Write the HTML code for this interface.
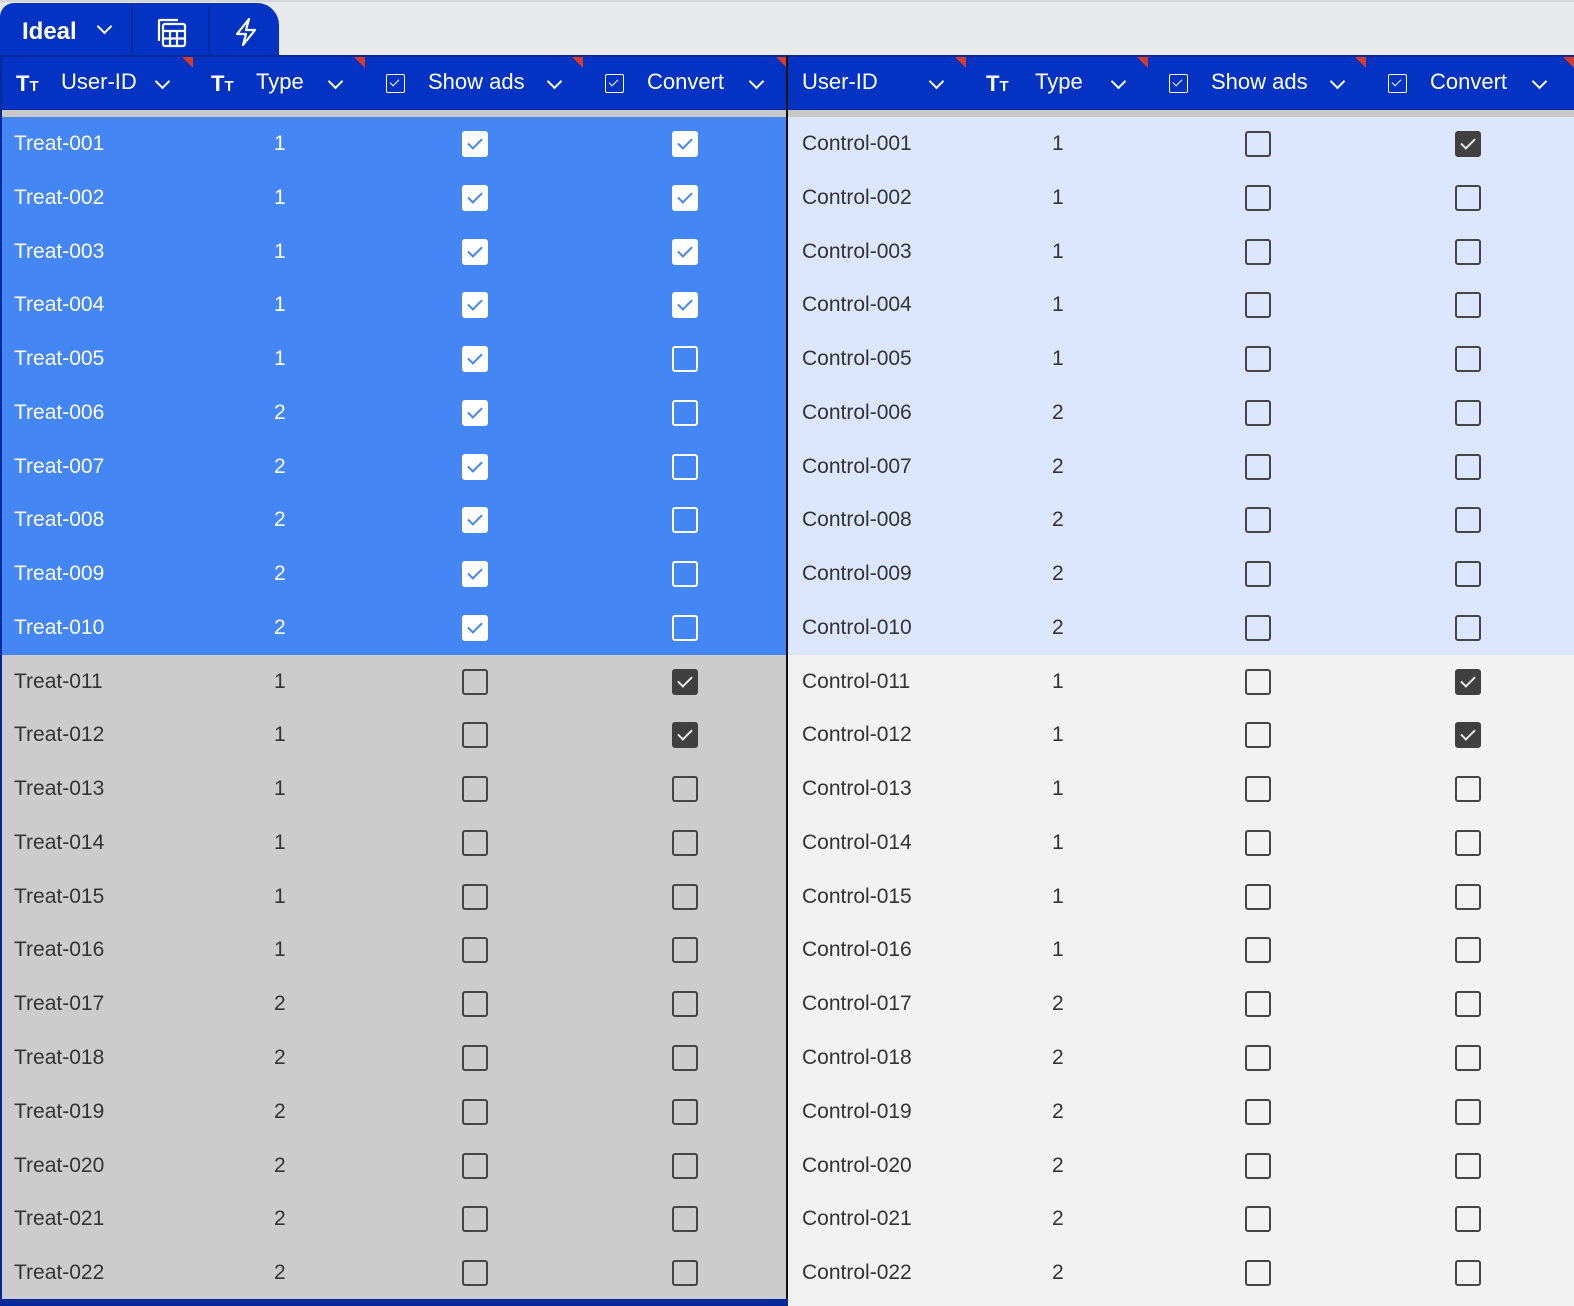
<!DOCTYPE html>
<html><head><meta charset="utf-8"><style>
*{margin:0;padding:0;box-sizing:border-box}
body{width:1574px;height:1306px;background:#e8e9eb;font-family:"Liberation Sans",sans-serif;position:relative;overflow:hidden}
.topl{position:absolute;top:0;left:0;width:1574px;height:2px;background:#d4d5d8}
.tabs{position:absolute;left:0;top:3px;width:279px;height:54px;background:#0433c4;border-radius:14px 22px 0 0}
.tabs .sep{position:absolute;top:2px;width:2px;height:52px;background:#032a9e}
.hdr{position:absolute;left:0;top:55px;width:1574px;height:56px;background:#0433c4;border-top:2px solid #05299a;border-bottom:2px solid #05299a;color:#fff;font-size:22px}
.hdr span{position:absolute;top:12px}
.tt{font-weight:bold;font-size:22px;top:14px!important}
.tt small{font-size:15px}
.hcb{position:absolute;top:17px;width:19px;height:19px;border:1.6px solid #fff;border-radius:2px}
.hcb:after{content:"";position:absolute;left:5px;top:2px;width:4px;height:8px;border-right:1.6px solid #fff;border-bottom:1.6px solid #fff;transform:rotate(45deg)}
.chev{position:absolute;top:19px;width:11px;height:11px;border-right:2.2px solid #fff;border-bottom:2.2px solid #fff;transform:rotate(45deg)}
.red{position:absolute;top:0;width:0;height:0;border-left:11px solid transparent;border-top:11px solid #d63a2a}
.strip{position:absolute;left:0;top:110px;width:1574px;height:7px;background:#c8c8c8}
.grid{position:absolute;left:0;top:117px;width:1574px;height:1183px}
.r{position:relative;height:53.78px;font-size:21px;color:#333}
.r span{position:absolute;top:15px}
.tr{background:#cccccc}
.ts{background:#4386f4;color:#fff}
.cr{background:#f2f2f2}
.cs{background:#dce6fe}
.half{position:absolute;top:0;height:100%}
.L{left:0;width:786px}
.R{left:788px;width:786px}
.cb{position:absolute;top:14px;width:26px;height:26px;border:2.6px solid #454545;border-radius:3px}
.ts .cb{border-color:#fff}
.cb.on{background:#404040;border-color:#404040}
.ts .cb.on{background:#fff;border-color:#fff}
.cb.on:after{content:"";position:absolute;left:7px;top:2px;width:6px;height:12px;border-right:2.4px solid #e8e8e8;border-bottom:2.4px solid #e8e8e8;transform:rotate(45deg)}
.ts .cb.on:after{border-color:#4386f4}
.divl{position:absolute;left:786px;top:55px;width:2px;height:1251px;background:#111}
.leftb{position:absolute;left:0;top:55px;width:2px;height:1250px;background:#05299a}
.bot{position:absolute;left:0;top:1299px;width:788px;height:7px;background:#05299a}
.bot2{position:absolute;left:788px;top:1300px;width:786px;height:6px;background:#f2f2f2}
</style></head><body>
<div class="topl"></div>
<div class="tabs">
<span style="position:absolute;left:22px;top:15px;color:#fff;font-size:24px;font-weight:bold">Ideal</span>
<div class="chev" style="left:99px;top:18px;border-color:#fff"></div>
<div class="sep" style="left:131px"></div>
<svg style="position:absolute;left:156px;top:14px" width="32" height="32" viewBox="0 0 32 32" fill="none" stroke="#fff" stroke-width="2.2"><path d="M3 24V4q0-1 1-1h18"/><rect x="7" y="7" width="22" height="22" rx="2"/><path d="M7 14h22M14 14v15M21 14v15M7 21.5h22"/></svg>
<div class="sep" style="left:208px"></div>
<svg style="position:absolute;left:233px;top:14px" width="26" height="30" viewBox="0 0 26 30" fill="none" stroke="#fff" stroke-width="2.2" stroke-linejoin="round"><path d="M16 2L4 17h9l-3 11 12-15h-9z"/></svg>
</div>
<div class="hdr">
<span class="tt" style="left:16px">T<small>T</small></span><span style="left:61px">User-ID</span><div class="chev" style="left:157px"></div><div class="red" style="left:182px"></div>
<span class="tt" style="left:211px">T<small>T</small></span><span style="left:256px">Type</span><div class="chev" style="left:330px"></div><div class="red" style="left:354px"></div>
<div class="hcb" style="left:386px"></div><span style="left:428px">Show ads</span><div class="chev" style="left:549px"></div><div class="red" style="left:572px"></div>
<div class="hcb" style="left:605px"></div><span style="left:647px">Convert</span><div class="chev" style="left:751px"></div><div class="red" style="left:776px"></div>
<span style="left:802px">User-ID</span><div class="chev" style="left:931px"></div><div class="red" style="left:955px"></div>
<span class="tt" style="left:986px">T<small>T</small></span><span style="left:1035px">Type</span><div class="chev" style="left:1113px"></div><div class="red" style="left:1137px"></div>
<div class="hcb" style="left:1169px"></div><span style="left:1211px">Show ads</span><div class="chev" style="left:1332px"></div><div class="red" style="left:1355px"></div>
<div class="hcb" style="left:1388px"></div><span style="left:1430px">Convert</span><div class="chev" style="left:1534px"></div><div class="red" style="left:1563px"></div>
</div>
<div class="strip"></div>
<div class="grid">
<div class="r"><div class="half L ts"><span style="left:14px">Treat-001</span><span style="left:274px">1</span><i class="cb on" style="left:462px"></i><i class="cb on" style="left:672px"></i></div><div class="half R cs"><span style="left:14px">Control-001</span><span style="left:264px">1</span><i class="cb" style="left:457px"></i><i class="cb on" style="left:667px"></i></div></div>
<div class="r"><div class="half L ts"><span style="left:14px">Treat-002</span><span style="left:274px">1</span><i class="cb on" style="left:462px"></i><i class="cb on" style="left:672px"></i></div><div class="half R cs"><span style="left:14px">Control-002</span><span style="left:264px">1</span><i class="cb" style="left:457px"></i><i class="cb" style="left:667px"></i></div></div>
<div class="r"><div class="half L ts"><span style="left:14px">Treat-003</span><span style="left:274px">1</span><i class="cb on" style="left:462px"></i><i class="cb on" style="left:672px"></i></div><div class="half R cs"><span style="left:14px">Control-003</span><span style="left:264px">1</span><i class="cb" style="left:457px"></i><i class="cb" style="left:667px"></i></div></div>
<div class="r"><div class="half L ts"><span style="left:14px">Treat-004</span><span style="left:274px">1</span><i class="cb on" style="left:462px"></i><i class="cb on" style="left:672px"></i></div><div class="half R cs"><span style="left:14px">Control-004</span><span style="left:264px">1</span><i class="cb" style="left:457px"></i><i class="cb" style="left:667px"></i></div></div>
<div class="r"><div class="half L ts"><span style="left:14px">Treat-005</span><span style="left:274px">1</span><i class="cb on" style="left:462px"></i><i class="cb" style="left:672px"></i></div><div class="half R cs"><span style="left:14px">Control-005</span><span style="left:264px">1</span><i class="cb" style="left:457px"></i><i class="cb" style="left:667px"></i></div></div>
<div class="r"><div class="half L ts"><span style="left:14px">Treat-006</span><span style="left:274px">2</span><i class="cb on" style="left:462px"></i><i class="cb" style="left:672px"></i></div><div class="half R cs"><span style="left:14px">Control-006</span><span style="left:264px">2</span><i class="cb" style="left:457px"></i><i class="cb" style="left:667px"></i></div></div>
<div class="r"><div class="half L ts"><span style="left:14px">Treat-007</span><span style="left:274px">2</span><i class="cb on" style="left:462px"></i><i class="cb" style="left:672px"></i></div><div class="half R cs"><span style="left:14px">Control-007</span><span style="left:264px">2</span><i class="cb" style="left:457px"></i><i class="cb" style="left:667px"></i></div></div>
<div class="r"><div class="half L ts"><span style="left:14px">Treat-008</span><span style="left:274px">2</span><i class="cb on" style="left:462px"></i><i class="cb" style="left:672px"></i></div><div class="half R cs"><span style="left:14px">Control-008</span><span style="left:264px">2</span><i class="cb" style="left:457px"></i><i class="cb" style="left:667px"></i></div></div>
<div class="r"><div class="half L ts"><span style="left:14px">Treat-009</span><span style="left:274px">2</span><i class="cb on" style="left:462px"></i><i class="cb" style="left:672px"></i></div><div class="half R cs"><span style="left:14px">Control-009</span><span style="left:264px">2</span><i class="cb" style="left:457px"></i><i class="cb" style="left:667px"></i></div></div>
<div class="r"><div class="half L ts"><span style="left:14px">Treat-010</span><span style="left:274px">2</span><i class="cb on" style="left:462px"></i><i class="cb" style="left:672px"></i></div><div class="half R cs"><span style="left:14px">Control-010</span><span style="left:264px">2</span><i class="cb" style="left:457px"></i><i class="cb" style="left:667px"></i></div></div>
<div class="r"><div class="half L tr"><span style="left:14px">Treat-011</span><span style="left:274px">1</span><i class="cb" style="left:462px"></i><i class="cb on" style="left:672px"></i></div><div class="half R cr"><span style="left:14px">Control-011</span><span style="left:264px">1</span><i class="cb" style="left:457px"></i><i class="cb on" style="left:667px"></i></div></div>
<div class="r"><div class="half L tr"><span style="left:14px">Treat-012</span><span style="left:274px">1</span><i class="cb" style="left:462px"></i><i class="cb on" style="left:672px"></i></div><div class="half R cr"><span style="left:14px">Control-012</span><span style="left:264px">1</span><i class="cb" style="left:457px"></i><i class="cb on" style="left:667px"></i></div></div>
<div class="r"><div class="half L tr"><span style="left:14px">Treat-013</span><span style="left:274px">1</span><i class="cb" style="left:462px"></i><i class="cb" style="left:672px"></i></div><div class="half R cr"><span style="left:14px">Control-013</span><span style="left:264px">1</span><i class="cb" style="left:457px"></i><i class="cb" style="left:667px"></i></div></div>
<div class="r"><div class="half L tr"><span style="left:14px">Treat-014</span><span style="left:274px">1</span><i class="cb" style="left:462px"></i><i class="cb" style="left:672px"></i></div><div class="half R cr"><span style="left:14px">Control-014</span><span style="left:264px">1</span><i class="cb" style="left:457px"></i><i class="cb" style="left:667px"></i></div></div>
<div class="r"><div class="half L tr"><span style="left:14px">Treat-015</span><span style="left:274px">1</span><i class="cb" style="left:462px"></i><i class="cb" style="left:672px"></i></div><div class="half R cr"><span style="left:14px">Control-015</span><span style="left:264px">1</span><i class="cb" style="left:457px"></i><i class="cb" style="left:667px"></i></div></div>
<div class="r"><div class="half L tr"><span style="left:14px">Treat-016</span><span style="left:274px">1</span><i class="cb" style="left:462px"></i><i class="cb" style="left:672px"></i></div><div class="half R cr"><span style="left:14px">Control-016</span><span style="left:264px">1</span><i class="cb" style="left:457px"></i><i class="cb" style="left:667px"></i></div></div>
<div class="r"><div class="half L tr"><span style="left:14px">Treat-017</span><span style="left:274px">2</span><i class="cb" style="left:462px"></i><i class="cb" style="left:672px"></i></div><div class="half R cr"><span style="left:14px">Control-017</span><span style="left:264px">2</span><i class="cb" style="left:457px"></i><i class="cb" style="left:667px"></i></div></div>
<div class="r"><div class="half L tr"><span style="left:14px">Treat-018</span><span style="left:274px">2</span><i class="cb" style="left:462px"></i><i class="cb" style="left:672px"></i></div><div class="half R cr"><span style="left:14px">Control-018</span><span style="left:264px">2</span><i class="cb" style="left:457px"></i><i class="cb" style="left:667px"></i></div></div>
<div class="r"><div class="half L tr"><span style="left:14px">Treat-019</span><span style="left:274px">2</span><i class="cb" style="left:462px"></i><i class="cb" style="left:672px"></i></div><div class="half R cr"><span style="left:14px">Control-019</span><span style="left:264px">2</span><i class="cb" style="left:457px"></i><i class="cb" style="left:667px"></i></div></div>
<div class="r"><div class="half L tr"><span style="left:14px">Treat-020</span><span style="left:274px">2</span><i class="cb" style="left:462px"></i><i class="cb" style="left:672px"></i></div><div class="half R cr"><span style="left:14px">Control-020</span><span style="left:264px">2</span><i class="cb" style="left:457px"></i><i class="cb" style="left:667px"></i></div></div>
<div class="r"><div class="half L tr"><span style="left:14px">Treat-021</span><span style="left:274px">2</span><i class="cb" style="left:462px"></i><i class="cb" style="left:672px"></i></div><div class="half R cr"><span style="left:14px">Control-021</span><span style="left:264px">2</span><i class="cb" style="left:457px"></i><i class="cb" style="left:667px"></i></div></div>
<div class="r"><div class="half L tr"><span style="left:14px">Treat-022</span><span style="left:274px">2</span><i class="cb" style="left:462px"></i><i class="cb" style="left:672px"></i></div><div class="half R cr"><span style="left:14px">Control-022</span><span style="left:264px">2</span><i class="cb" style="left:457px"></i><i class="cb" style="left:667px"></i></div></div>
</div>
<div class="leftb"></div>
<div class="divl"></div>
<div class="bot"></div>
<div class="bot2"></div>
</body></html>
